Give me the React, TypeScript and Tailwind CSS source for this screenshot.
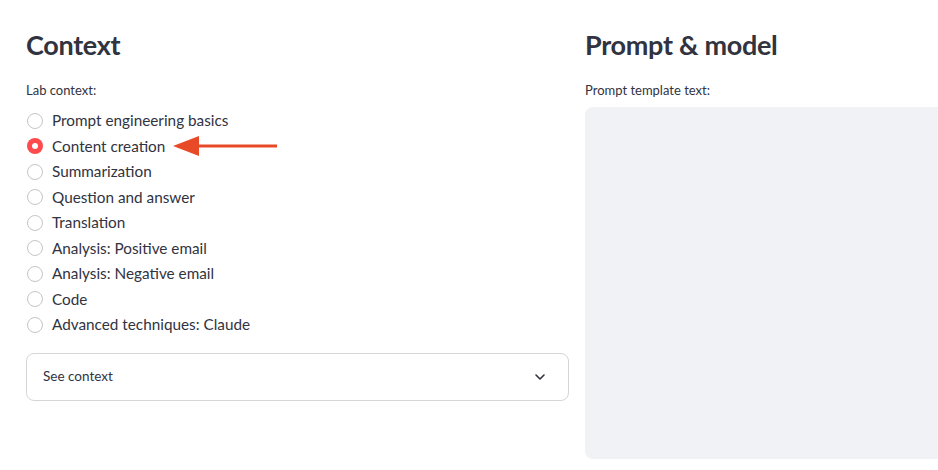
import React from 'react';

const options = [
  'Prompt engineering basics',
  'Content creation',
  'Summarization',
  'Question and answer',
  'Translation',
  'Analysis: Positive email',
  'Analysis: Negative email',
  'Code',
  'Advanced techniques: Claude',
];

const Radio: React.FC<{ checked: boolean }> = ({ checked }) =>
  checked ? (
    <span className="w-4 h-4 rounded-full bg-[#ff4b4b] flex items-center justify-center shrink-0">
      <span className="w-[6px] h-[6px] rounded-full bg-white" />
    </span>
  ) : (
    <span className="w-4 h-4 rounded-full border border-[#c4c5c9] bg-white shrink-0" />
  );

export default function App() {
  return (
    <div className="w-[938px] h-[470px] overflow-hidden bg-white text-[#31333f] font-['Lato','Liberation_Sans',sans-serif]">
      <div className="flex gap-4 pl-[26px] pt-[25px]">
        {/* left column */}
        <div className="w-[543px] shrink-0 flex flex-col">
          <h2 className="h-[40px] flex items-center text-[27px] font-bold tracking-[-0.3px]">Context</h2>
          <div className="h-[20px] mt-[16px] flex items-center text-[13px]">Lab context:</div>
          <div className="mt-[7px] flex flex-col">
            {options.map((o, i) => (
              <div key={o} className="h-[25.5px] flex items-center gap-[9px] pl-px">
                <Radio checked={i === 1} />
                <span className="text-[15.3px] leading-none">{o}</span>
                {i === 1 && (
                  <svg width="110" height="22" viewBox="0 0 110 22" className="-ml-[1px]">
                    <path d="M0 11 L26 1 L26 21 Z" fill="#e84a27" />
                    <rect x="24" y="9.5" width="80" height="3" fill="#e84a27" />
                  </svg>
                )}
              </div>
            ))}
          </div>
          <div className="mt-[15px] h-[48px] rounded-lg border border-[#d6d6d9] flex items-center justify-between px-4">
            <span className="text-[13.5px]">See context</span>
            <svg width="12" height="8" viewBox="0 0 12 8" className="mr-[6px]">
              <path d="M2 2 L6 6 L10 2" fill="none" stroke="#31333f" strokeWidth="1.6" strokeLinecap="round" strokeLinejoin="round" />
            </svg>
          </div>
        </div>
        {/* right column */}
        <div className="w-[543px] shrink-0 flex flex-col">
          <h2 className="h-[40px] flex items-center text-[27px] font-bold tracking-[-0.3px]">Prompt &amp; model</h2>
          <div className="h-[20px] mt-[16px] flex items-center text-[13px]">Prompt template text:</div>
          <textarea className="mt-[6px] h-[352px] w-full rounded-lg bg-[#f0f2f6] resize-none outline-none" />
        </div>
      </div>
    </div>
  );
}
